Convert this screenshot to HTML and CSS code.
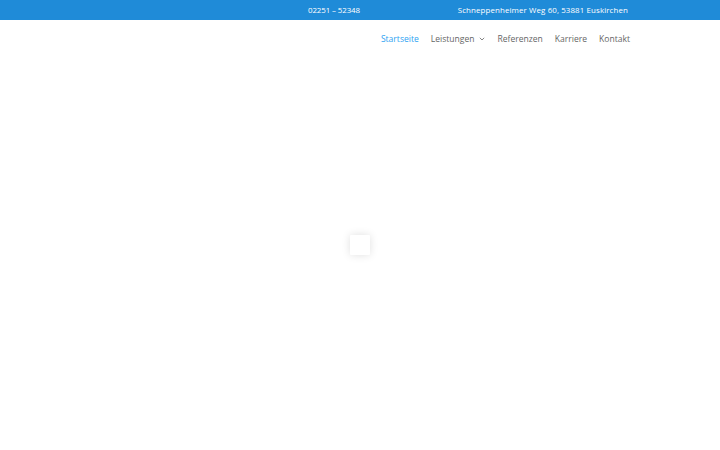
FILE: index.html
```html
<!DOCTYPE html>
<html lang="de">
<head>
<meta charset="utf-8">
<link rel="stylesheet" href="styles.css">
</head>
<body>
<div class="topbar">
  <span class="phone">02251 – 52348</span>
  <span class="address">Schneppenheimer Weg 60, 53881 Euskirchen</span>
</div>
<header class="header">
  <nav class="nav">
    <a class="item active">Startseite</a>
    <a class="item">Leistungen <svg class="chev" width="6" height="4" viewBox="0 0 6 4"><path d="M0.8 0.8 L3 3 L5.2 0.8" fill="none" stroke="#777" stroke-width="0.9"/></svg></a>
    <a class="item">Referenzen</a>
    <a class="item">Karriere</a>
    <a class="item">Kontakt</a>
  </nav>
</header>
<div class="loader"></div>
</body>
</html>
```
FILE: styles.css
```css
html, body { margin: 0; padding: 0; background: #fff; }
body { font-family: "Open Sans", "Liberation Sans", sans-serif; width: 720px; height: 450px; position: relative; overflow: hidden; }
.topbar {
  height: 20px; background: #1f8bd8; color: #fff;
  display: flex; align-items: center;
  padding: 0 92px 0 308px;
  font-size: 7.9px; letter-spacing: 0.12px; font-weight: 500;
}
.phone { letter-spacing: -0.1px; }
.address { margin-left: auto; }
.header { height: 37px; display: flex; align-items: center; }
.nav { display: flex; margin-left: auto; padding-right: 90px; gap: 12px; font-size: 8.55px; font-weight: 500; }
.item { color: #666; text-decoration: none; display: flex; align-items: center; }
.item.active { color: #2ea3f2; }
.chev { margin-left: 5px; }
.loader {
  position: absolute; left: 350px; top: 235px; width: 20px; height: 20px;
  background: #fff; box-shadow: 0 0 8px rgba(0,0,0,0.13); border-radius: 1px;
}
```
